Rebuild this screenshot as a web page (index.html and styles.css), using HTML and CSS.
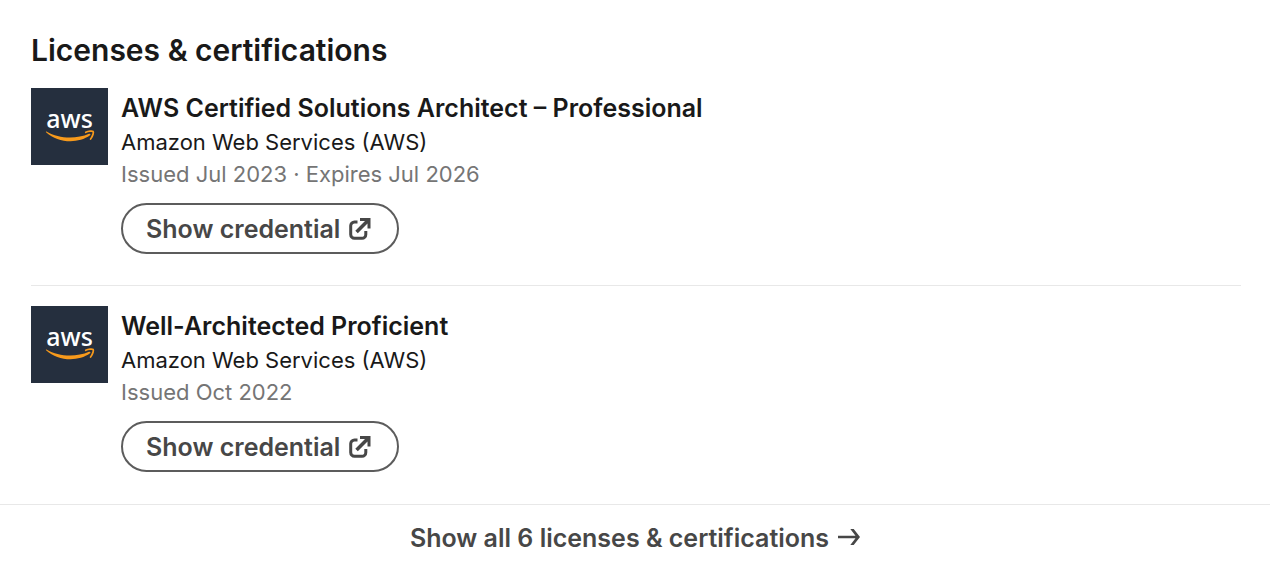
FILE: index.html
```html
<!DOCTYPE html>
<html lang="en">
<head>
<meta charset="utf-8">
<meta name="viewport" content="width=device-width, initial-scale=1">
<title>Licenses &amp; certifications</title>
<link rel="stylesheet" href="styles.css">
</head>
<body>
<svg class="symbols">
  <symbol id="logo" viewBox="0 0 77 77">
    <path d="M15.500 43.500c7 4.300 15 6 23.500 6 6.500 0 13.300-1.200 19-3.700 1.200-.6 2 .8 1 1.500-5.200 4-12.800 5.900-19.500 5.900-9.200 0-17.800-3.200-24.200-8.800-.7-.7-.4-1.200.2-.9z" fill="#f79a1c"/>
    <path d="M54.800 44.300c2.500-1.200 6.400-1.500 7.300-.8.700.7-.3 5-2.500 7.500" fill="none" stroke="#f79a1c" stroke-width="1.800" stroke-linecap="round"/>
  </symbol>
  <symbol id="external" viewBox="0 0 22 22">
    <path d="M8.500 4H5.500A3.800 3.800 0 0 0 1.700 7.800V16.500a3.800 3.800 0 0 0 3.800 3.800H13a3.800 3.800 0 0 0 3.800-3.800V13" fill="none" stroke="currentColor" stroke-width="3"/>
    <path d="M11 0h10.500v10.500h-3V5.500l-9.700 9.700-2.500-2.500L16 3H11z" fill="currentColor"/>
  </symbol>
</svg>
<main class="card">
  <section class="content">
    <h2 class="heading">Licenses &amp; certifications</h2>
    <ul class="list">
      <li class="item">
        <a class="logo" href="#" aria-label="Amazon Web Services"><span class="logo-text">aws</span><svg class="logo-smile"><use href="#logo"/></svg></a>
        <div class="details">
          <h3 class="title">AWS Certified Solutions Architect – Professional</h3>
          <p class="issuer">Amazon Web Services (AWS)</p>
          <p class="date">Issued Jul 2023 · Expires Jul 2026</p>
          <a class="credential" href="#">Show credential<svg class="icon"><use href="#external"/></svg></a>
        </div>
      </li>
      <li class="item">
        <a class="logo" href="#" aria-label="Amazon Web Services"><span class="logo-text">aws</span><svg class="logo-smile"><use href="#logo"/></svg></a>
        <div class="details">
          <h3 class="title">Well-Architected Proficient</h3>
          <p class="issuer">Amazon Web Services (AWS)</p>
          <p class="date">Issued Oct 2022</p>
          <a class="credential" href="#">Show credential<svg class="icon"><use href="#external"/></svg></a>
        </div>
      </li>
    </ul>
  </section>
  <a class="show-all" href="#">Show all 6 licenses &amp; certifications<svg class="arrow" viewBox="0 0 22 20"><path d="M0 7.700h17.500L12.300 1h3.400L22 9l-6.300 8h-3.400l5.200-6.700H0z" fill="currentColor"/></svg></a>
</main>
</body>
</html>
```
FILE: styles.css
```css
* {
  box-sizing: border-box;
}

body {
  margin: 0;
  background: #fff;
  color: #191919;
  font-family: Inter, "Liberation Sans", sans-serif;
}

h2, h3, p, ul {
  margin: 0;
  padding: 0;
}

a {
  color: inherit;
  text-decoration: none;
}

.symbols {
  display: none;
}

.content {
  padding: 30px 29px 1px 31px;
}

.heading {
  font-size: 30px;
  line-height: 40px;
  font-weight: 600;
}

.list {
  list-style: none;
}

.item {
  display: flex;
  align-items: flex-start;
  gap: 13px;
  padding: 18px 0 31px;
}

.item + .item {
  border-top: 1px solid #e8e8e8;
  padding-top: 20px;
}

.logo {
  position: relative;
  flex: none;
  width: 77px;
  height: 77px;
  background: #252f3e;
  color: #fff;
  text-align: center;
}

.logo-text {
  font: 500 25px/60px "Noto Sans", sans-serif;
}

.logo-smile {
  position: absolute;
  inset: 0;
  width: 77px;
  height: 77px;
}

.title {
  padding: 3px 0 1px;
  font-size: 25px;
  line-height: 34px;
  font-weight: 600;
}

.issuer,
.date {
  font-size: 22px;
  line-height: 32px;
}

.date {
  color: #757575;
}

.credential {
  display: inline-flex;
  align-items: center;
  gap: 9px;
  height: 51px;
  margin-top: 13px;
  padding: 0 26px 0 23px;
  border: 2px solid #5c5c5c;
  border-radius: 26px;
  color: #474747;
  font-size: 25px;
  font-weight: 600;
}

.icon {
  width: 22px;
  height: 22px;
}

.show-all {
  display: flex;
  align-items: center;
  justify-content: center;
  gap: 9px;
  padding: 16px 0 11px;
  border-top: 1px solid #e8e8e8;
  color: #474747;
  font-size: 25px;
  line-height: 34px;
  font-weight: 600;
}

.arrow {
  width: 22px;
  height: 20px;
}
```
